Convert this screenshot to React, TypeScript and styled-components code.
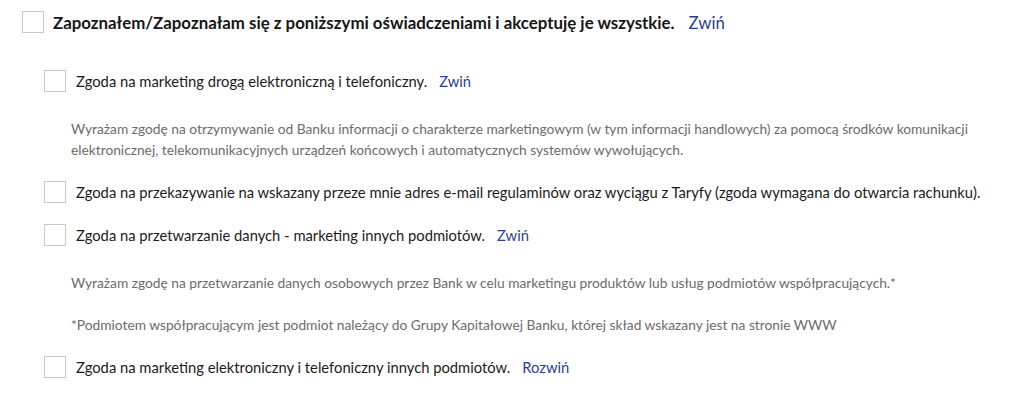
import React, { useState } from 'react';
import styled, { createGlobalStyle } from 'styled-components';

const GlobalStyle = createGlobalStyle`
  body {
    margin: 0;
    background: #ffffff;
    font-family: 'Lato', 'Liberation Sans', sans-serif;
    color: #1c1c1c;
  }
`

const Page = styled.div`
  padding: 11px 22px 20px 22px;
`

const MainRow = styled.div`
  display: flex;
  align-items: center;
  gap: 9px;
  height: 22px;
`

const Box = styled.button`
  width: 22px;
  height: 22px;
  flex: 0 0 22px;
  box-sizing: border-box;
  border: 1px solid #c9c9c9;
  background: #fff;
  padding: 0;
  margin: 0;
  cursor: pointer;
  display: flex;
  align-items: center;
  justify-content: center;
  color: #ff6200;
  font-size: 14px;
`

const MainLabel = styled.span`
  font-size: 16.85px;
  font-weight: 700;
  color: #161616;
`

const Toggle = styled.button<{ $gap?: number }>`
  background: none;
  border: none;
  padding: 0;
  margin-left: ${p => p.$gap ?? 13}px;
  font-family: inherit;
  font-size: inherit;
  font-weight: 400;
  color: #2b3f8c;
  cursor: pointer;
`

const List = styled.div`
  display: flex;
  flex-direction: column;
  gap: 21px;
  margin-top: 37px;
  padding-left: 22px;
`

const ItemRow = styled.div`
  display: flex;
  align-items: center;
  gap: 10px;
  height: 22px;
`

const ItemLabel = styled.span`
  font-size: 14.75px;
  color: #1a1a1a;
`

const Details = styled.div`
  display: flex;
  flex-direction: column;
  gap: 21px;
  padding-left: 27px;
  margin-top: 26px;
`

const Para = styled.p`
  margin: 0;
  font-size: 13.75px;
  line-height: 21px;
  color: #6c6c6c;
  max-width: 920px;
`

type Consent = {
  label: string;
  details?: string[];
  open: boolean;
}

const initial: Consent[] = [
  {
    label: 'Zgoda na marketing drogą elektroniczną i telefoniczny.',
    details: [
      'Wyrażam zgodę na otrzymywanie od Banku informacji o charakterze marketingowym (w tym informacji handlowych) za pomocą środków komunikacji elektronicznej, telekomunikacyjnych urządzeń końcowych i automatycznych systemów wywołujących.',
    ],
    open: true,
  },
  {
    label: 'Zgoda na przekazywanie na wskazany przeze mnie adres e-mail regulaminów oraz wyciągu z Taryfy (zgoda wymagana do otwarcia rachunku).',
    open: false,
  },
  {
    label: 'Zgoda na przetwarzanie danych - marketing innych podmiotów.',
    details: [
      'Wyrażam zgodę na przetwarzanie danych osobowych przez Bank w celu marketingu produktów lub usług podmiotów współpracujących.*',
      '*Podmiotem współpracującym jest podmiot należący do Grupy Kapitałowej Banku, której skład wskazany jest na stronie WWW',
    ],
    open: true,
  },
  {
    label: 'Zgoda na marketing elektroniczny i telefoniczny innych podmiotów.',
    details: [
      'Wyrażam zgodę na przekazywanie informacji marketingowych podmiotów współpracujących.',
    ],
    open: false,
  },
];

const App: React.FC = () => {
  const [items, setItems] = useState<Consent[]>(initial);
  const [checked, setChecked] = useState<boolean[]>(initial.map(() => false));
  const [allOpen, setAllOpen] = useState(true);

  const allChecked = checked.every(Boolean);

  const toggleItem = (index: number) => {
    setItems(items.map((item, i) => (i === index ? { ...item, open: !item.open } : item)));
  };

  const checkItem = (index: number) => {
    setChecked(checked.map((c, i) => (i === index ? !c : c)));
  };

  return (
    <>
      <GlobalStyle />
      <Page>
        <MainRow>
          <Box onClick={() => setChecked(checked.map(() => !allChecked))}>{allChecked ? '✓' : ''}</Box>
          <MainLabel>
            Zapoznałem/Zapoznałam się z poniższymi oświadczeniami i akceptuję je wszystkie.
            <Toggle $gap={14} onClick={() => setAllOpen(!allOpen)}>{allOpen ? 'Zwiń' : 'Rozwiń'}</Toggle>
          </MainLabel>
        </MainRow>
        {allOpen && (
          <List>
            {items.map((item, index) => (
              <div key={index}>
                <ItemRow>
                  <Box onClick={() => checkItem(index)}>{checked[index] ? '✓' : ''}</Box>
                  <ItemLabel>
                    {item.label}
                    {item.details && (
                      <Toggle $gap={12} onClick={() => toggleItem(index)}>{item.open ? 'Zwiń' : 'Rozwiń'}</Toggle>
                    )}
                  </ItemLabel>
                </ItemRow>
                {item.details && item.open && (
                  <Details>
                    {item.details.map((text, i) => (
                      <Para key={i}>{text}</Para>
                    ))}
                  </Details>
                )}
              </div>
            ))}
          </List>
        )}
      </Page>
    </>
  );
};

export default App;
